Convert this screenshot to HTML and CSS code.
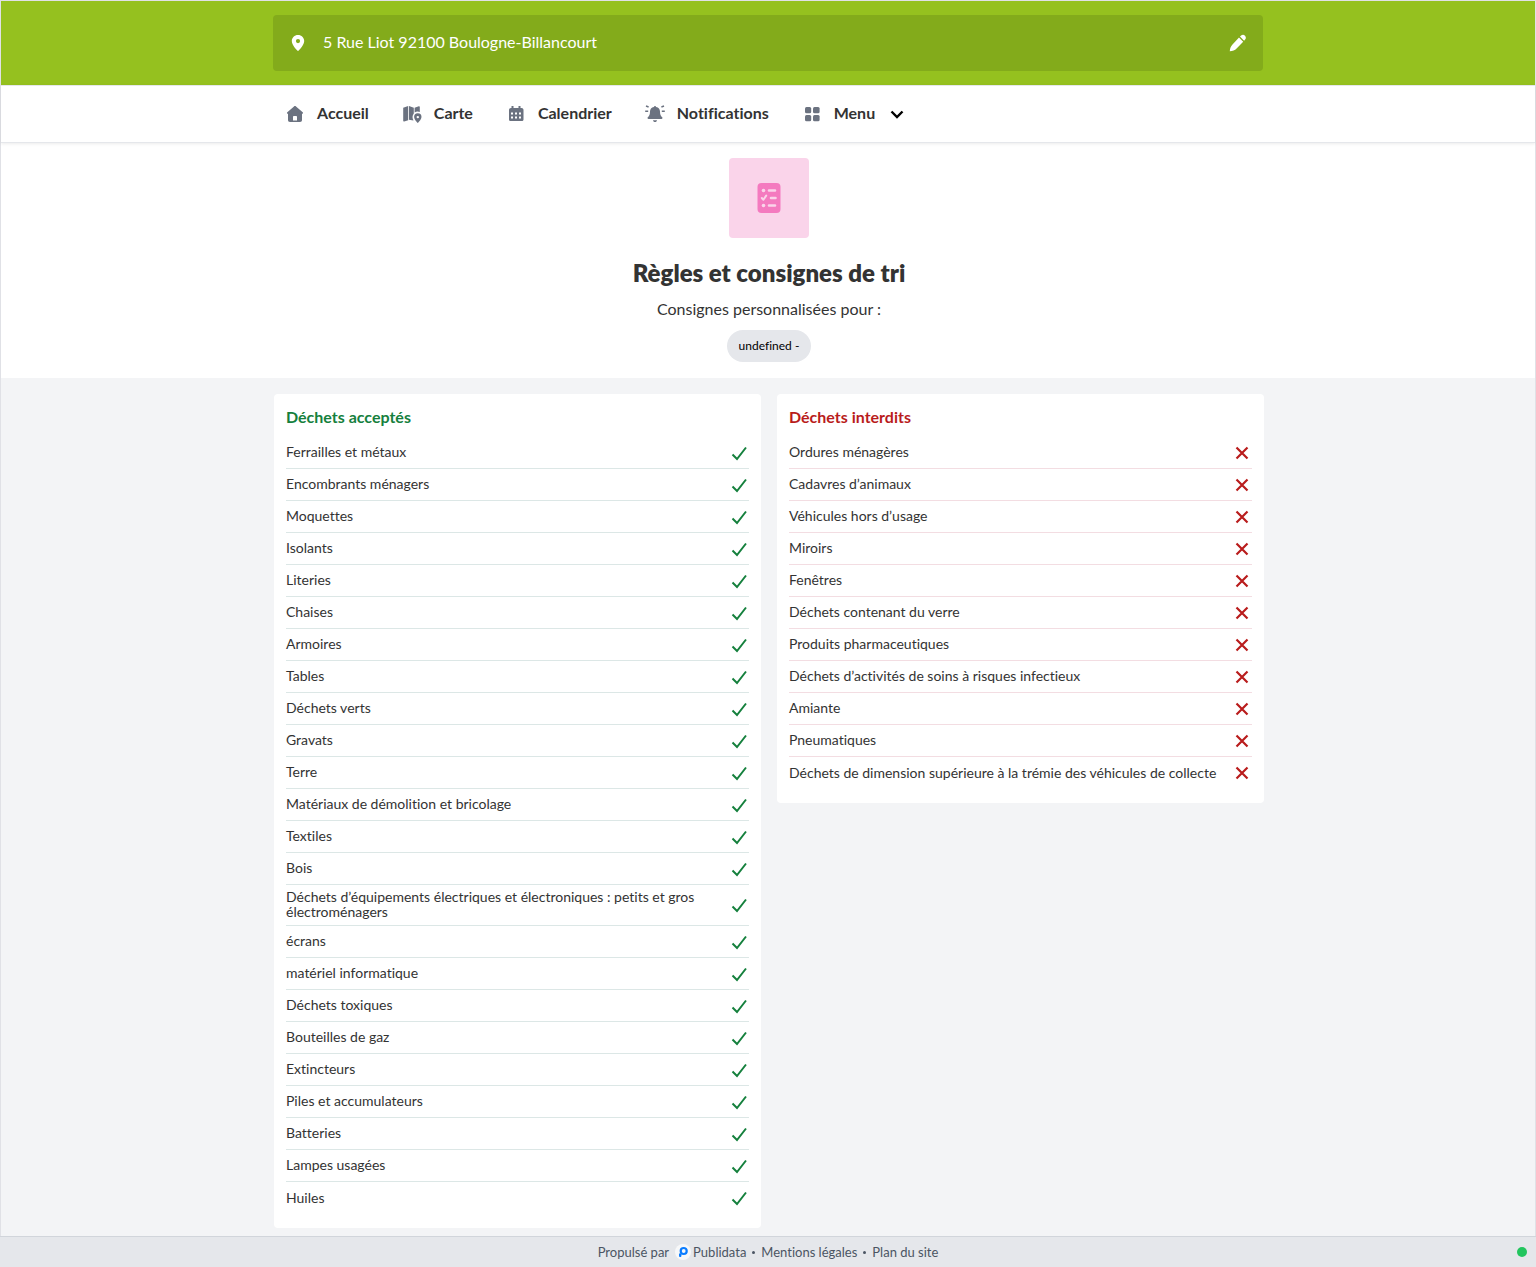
FILE: index.html
```html
<!DOCTYPE html>
<html lang="fr">
<head>
<meta charset="utf-8">
<meta name="viewport" content="width=device-width, initial-scale=1">
<title>Règles et consignes de tri</title>
<link rel="stylesheet" href="styles.css">
</head>
<body>
<svg class="sprite" aria-hidden="true">
  <symbol id="check" viewBox="0 0 20 20"><path d="M3.500 12.500l4.500 4.500L17 5.500" fill="none" stroke="currentColor" stroke-width="2"/></symbol>
  <symbol id="cross" viewBox="0 0 20 20"><path d="M4.500 5.500l11 11M15.500 5.500l-11 11" fill="none" stroke="currentColor" stroke-width="2.200"/></symbol>
</svg>
<div class="page">
  <header class="topbar">
    <div class="address container">
      <svg class="icon" viewBox="0 0 20 20"><path fill="currentColor" fill-rule="evenodd" d="M10 2C6.500 2 3.800 4.700 3.800 8.100c0 4.200 4.700 8.500 5.500 9.500.4.500 1 .5 1.400 0 .8-1 5.500-5.300 5.500-9.500C16.200 4.700 13.500 2 10 2zm0 4a2.100 2.100 0 1 1 0 4.200A2.100 2.100 0 0 1 10 6z"/></svg>
      <span class="address-text">5 Rue Liot 92100 Boulogne-Billancourt</span>
      <button class="edit" type="button" aria-label="Modifier l’adresse"><svg class="icon" viewBox="0 0 20 20"><path fill="currentColor" d="M12 3.600l1.100-1c1.200-1.100 2.800-1 3.900.1s1.200 2.700.1 3.900l-1 1.100zM11 4.600l4.200 4.200-6.600 6.600C6.900 17.100 4.600 18 1.800 18.200c.1-2.800 1-5.100 2.700-6.800z"/></svg></button>
    </div>
  </header>
  <nav class="nav">
    <div class="nav-list container">
      <a class="nav-link" href="#"><svg class="icon" viewBox="0 0 20 20"><path fill="currentColor" fill-rule="evenodd" d="M10 2c.4 0 .7.200 1 .4l6.700 5.800c.7.700.3 1.600-.6 1.600H17V16c0 1.300-.7 2-2 2H5c-1.300 0-2-.7-2-2V9.800h-.1c-.9 0-1.300-.9-.6-1.600L9 2.400c.3-.2.600-.4 1-.4zM8.800 12c-.5 0-.8.300-.8.800V16.500h4v-3.700c0-.5-.3-.8-.8-.8z"/></svg><span class="nav-label">Accueil</span></a>
      <a class="nav-link" href="#"><svg class="icon" viewBox="0 0 20 20"><path fill="currentColor" d="M1.200 3.800L6.200 2v14.200L2.200 17.500c-.6.200-1-.1-1-.7zM7 2l4.800 1.800v5.700A6 6 0 0 0 10.500 13c0 1.300.4 2.400 1 3.400L7 15.800zM12.600 3.800l4.200-1.600c.6-.2 1 .1 1 .7V8a5.500 5.500 0 0 0-5.200.6z"/><path fill="currentColor" fill-rule="evenodd" d="M15.800 9.300a3.700 3.700 0 0 0-3.700 3.800c0 2.100 2.300 4.400 3.100 5.500.3.400.8.400 1.100 0 .8-1.100 3.200-3.400 3.200-5.500a3.700 3.700 0 0 0-3.700-3.800zm0 2.600a1.200 1.200 0 1 1 0 2.400 1.200 1.200 0 0 1 0-2.400z"/></svg><span class="nav-label">Carte</span></a>
      <a class="nav-link" href="#"><svg class="icon" viewBox="0 0 20 20"><path fill="currentColor" fill-rule="evenodd" d="M5.500 2h2v2h5V2h2v2h1c1.200 0 2 .8 2 2v9.500c0 1-.8 1.500-1.800 1.500H4.800C3.800 17 3 16.500 3 15.500V6c0-1.200.8-2 2-2h.5zM5 8.500v2h2v-2zm4 0v2h2v-2zm4 0v2h2v-2zm-8 4v2h2v-2zm4 0v2h2v-2zm4 0v2h2v-2z"/></svg><span class="nav-label">Calendrier</span></a>
      <a class="nav-link" href="#"><svg class="icon" viewBox="0 0 20 20"><path fill="currentColor" d="M10 2c.6 0 1 .4 1.100.9 2.500.5 3.900 2.300 3.900 4.500 0 3 .7 4.500 2.200 5.900.6.600.3 1.700-.7 1.700H3.500c-1 0-1.300-1.100-.7-1.700C4.300 11.900 5 10.400 5 7.400c0-2.200 1.400-4 3.900-4.500C9 2.400 9.400 2 10 2zM8 16.200h4c0 1-1 1.800-2 1.800s-2-.8-2-1.800z"/><path d="M1 2l2.600 1M19 2l-2.600 1M.2 7.300h3M19.800 7.300h-3" stroke="currentColor" stroke-width="1.500"/></svg><span class="nav-label">Notifications</span></a>
      <button class="nav-link" type="button"><svg class="icon" viewBox="0 0 20 20"><g fill="currentColor"><rect x="3" y="3" width="6.200" height="6.200" rx="1.500"/><rect x="11" y="3" width="6.600" height="6.200" rx="1.500"/><rect x="3" y="11" width="6.200" height="6.200" rx="1.500"/><rect x="11" y="11" width="6.600" height="6.200" rx="1.500"/></g></svg><span class="nav-label">Menu</span><svg class="chevron" viewBox="0 0 20 20"><path d="M4.500 7.500l5.500 5.500 5.500-5.500" fill="none" stroke="currentColor" stroke-width="2.400"/></svg></button>
    </div>
  </nav>
  <main>
    <section class="intro">
      <div class="badge"><svg class="badge-icon" viewBox="0 0 32 32"><rect x="4.500" y="1" width="23" height="30" rx="4" fill="#f47abf"/><g fill="none" stroke="#fad4ea" stroke-width="2.600" stroke-linecap="round"><path d="M16 8.500h6M18 16h4.500M16 23.500h6"/><path d="M8.800 16l1.600 1.800 2.800-4.200" stroke-width="2" stroke-linejoin="round"/></g><g fill="#fad4ea"><circle cx="10.500" cy="8.500" r="1.800"/><circle cx="10.500" cy="23.500" r="1.800"/></g></svg></div>
      <h1 class="title">Règles et consignes de tri</h1>
      <p class="subtitle">Consignes personnalisées pour :</p>
      <span class="pill">undefined -</span>
    </section>
    <section class="lists">
      <div class="columns container">
        <article class="card accepted">
          <h2 class="card-title">Déchets acceptés</h2>
          <ul class="items">
            <li>Ferrailles et métaux<svg class="mark"><use href="#check"/></svg></li>
            <li>Encombrants ménagers<svg class="mark"><use href="#check"/></svg></li>
            <li>Moquettes<svg class="mark"><use href="#check"/></svg></li>
            <li>Isolants<svg class="mark"><use href="#check"/></svg></li>
            <li>Literies<svg class="mark"><use href="#check"/></svg></li>
            <li>Chaises<svg class="mark"><use href="#check"/></svg></li>
            <li>Armoires<svg class="mark"><use href="#check"/></svg></li>
            <li>Tables<svg class="mark"><use href="#check"/></svg></li>
            <li>Déchets verts<svg class="mark"><use href="#check"/></svg></li>
            <li>Gravats<svg class="mark"><use href="#check"/></svg></li>
            <li>Terre<svg class="mark"><use href="#check"/></svg></li>
            <li>Matériaux de démolition et bricolage<svg class="mark"><use href="#check"/></svg></li>
            <li>Textiles<svg class="mark"><use href="#check"/></svg></li>
            <li>Bois<svg class="mark"><use href="#check"/></svg></li>
            <li>Déchets d’équipements électriques et électroniques : petits et gros électroménagers<svg class="mark"><use href="#check"/></svg></li>
            <li>écrans<svg class="mark"><use href="#check"/></svg></li>
            <li>matériel informatique<svg class="mark"><use href="#check"/></svg></li>
            <li>Déchets toxiques<svg class="mark"><use href="#check"/></svg></li>
            <li>Bouteilles de gaz<svg class="mark"><use href="#check"/></svg></li>
            <li>Extincteurs<svg class="mark"><use href="#check"/></svg></li>
            <li>Piles et accumulateurs<svg class="mark"><use href="#check"/></svg></li>
            <li>Batteries<svg class="mark"><use href="#check"/></svg></li>
            <li>Lampes usagées<svg class="mark"><use href="#check"/></svg></li>
            <li>Huiles<svg class="mark"><use href="#check"/></svg></li>
          </ul>
        </article>
        <article class="card refused">
          <h2 class="card-title">Déchets interdits</h2>
          <ul class="items">
            <li>Ordures ménagères<svg class="mark"><use href="#cross"/></svg></li>
            <li>Cadavres d’animaux<svg class="mark"><use href="#cross"/></svg></li>
            <li>Véhicules hors d’usage<svg class="mark"><use href="#cross"/></svg></li>
            <li>Miroirs<svg class="mark"><use href="#cross"/></svg></li>
            <li>Fenêtres<svg class="mark"><use href="#cross"/></svg></li>
            <li>Déchets contenant du verre<svg class="mark"><use href="#cross"/></svg></li>
            <li>Produits pharmaceutiques<svg class="mark"><use href="#cross"/></svg></li>
            <li>Déchets d’activités de soins à risques infectieux<svg class="mark"><use href="#cross"/></svg></li>
            <li>Amiante<svg class="mark"><use href="#cross"/></svg></li>
            <li>Pneumatiques<svg class="mark"><use href="#cross"/></svg></li>
            <li>Déchets de dimension supérieure à la trémie des véhicules de collecte<svg class="mark"><use href="#cross"/></svg></li>
          </ul>
        </article>
      </div>
    </section>
  </main>
</div>
<footer class="footer">
  <span>Propulsé par</span>
  <a class="brand" href="#"><svg class="logo" viewBox="0 0 16 16"><circle cx="8" cy="8" r="8" fill="#fff" opacity=".7"/><circle cx="8.700" cy="7" r="3" fill="none" stroke="#0a7cff" stroke-width="2.200"/><path d="M4 9.500v2.300c0 .8.500 1.200 1.200 1.200s1.200-.4 1.200-1.200V9.500z" fill="#0a7cff"/></svg>Publidata</a>
  <span class="dot"></span>
  <a href="#">Mentions légales</a>
  <span class="dot"></span>
  <a href="#">Plan du site</a>
  <span class="status"></span>
</footer>
</body>
</html>
```

FILE: styles.css
```css
*, *::before, *::after { box-sizing: border-box; }
body {
  margin: 0;
  min-height: 100vh;
  display: flex;
  flex-direction: column;
  font-family: Lato, "Liberation Sans", sans-serif;
  font-size: 16px;
  line-height: 24px;
  font-variant-ligatures: none;
  color: #333;
  background: #f3f4f6;
}
h1, h2, p, ul { margin: 0; padding: 0; }
a { color: inherit; text-decoration: none; }
button { font: inherit; font-variant-ligatures: none; color: inherit; background: none; border: 0; padding: 0; cursor: pointer; }
svg { display: block; flex: none; }
.sprite { position: absolute; width: 0; height: 0; }
.icon, .chevron, .mark { width: 20px; height: 20px; }
.container { width: 100%; max-width: 990px; margin: 0 auto; }

.page { flex: 1; border: 1px solid #e0e1e6; border-bottom: 0; }
.topbar { padding: 14px 16px; background: #95c11f; color: #fff; }
.address {
  display: flex;
  align-items: center;
  min-height: 56px;
  padding: 0 15px;
  background: #83ab1b;
  border-radius: 4px;
}
.address-text { flex: 1; padding: 0 15px 2px; }

.nav {
  position: relative;
  padding: 0 16px;
  background: #fff;
  border: solid #e5e7eb;
  border-width: 1px 0;
  box-shadow: 0 1px 3px rgba(0, 0, 0, .08);
}
.nav-list { display: flex; flex-wrap: wrap; gap: 9px; }
.nav-link {
  display: flex;
  align-items: center;
  gap: 12px;
  padding: 15px 12px;
  font-weight: 700;
}
.nav-label { padding-bottom: 2px; }
.nav-link .icon { color: #6b7280; }
.chevron { color: #000; }

.intro {
  display: flex;
  flex-direction: column;
  align-items: center;
  padding: 15px 16px 16px 18px;
  text-align: center;
  background: #fff;
}
.badge {
  display: grid;
  place-items: center;
  width: 80px;
  height: 80px;
  border-radius: 4px;
  background: #fad4ea;
}
.badge-icon { width: 32px; height: 32px; }
.title { margin-top: 19px; font-size: 24px; line-height: 32px; font-weight: 800; }
.subtitle { margin-top: 8px; }
.pill {
  margin-top: 9px;
  padding: 0 12px;
  border-radius: 16px;
  background: #e5e7eb;
  color: #000;
  font-size: 12px;
  line-height: 32px;
}

.lists { padding: 16px 16px 8px 18px; }
.columns {
  display: grid;
  grid-template-columns: repeat(auto-fit, minmax(320px, 1fr));
  align-items: start;
  gap: 16px;
}
.card { padding: 11px 12px 14px; background: #fff; border-radius: 4px; }
.card-title { margin-bottom: 8px; font-size: 16px; line-height: 24px; font-weight: 700; }
.items { list-style: none; font-size: 14px; line-height: 15px; }
.items li {
  display: flex;
  align-items: center;
  justify-content: space-between;
  gap: 8px;
  min-height: 32px;
  padding: 4px 0 6px;
  border-bottom: 1px solid;
}
.items li:last-child { border-bottom: 0; }
.accepted .card-title, .accepted .mark { color: #15803d; }
.refused .card-title, .refused .mark { color: #b91c1c; }
.accepted li { border-color: #dce7e6; }
.refused li { border-color: #f3dde2; }

.footer {
  position: relative;
  display: flex;
  flex-wrap: wrap;
  align-items: center;
  justify-content: center;
  gap: 6px;
  min-height: 31px;
  border-top: 1px solid #d1d5db;
  background: #e5e7eb;
  color: #4b5563;
  font-size: 13px;
  line-height: 20px;
}
.brand { display: flex; align-items: center; gap: 2px; }
.logo { width: 16px; height: 16px; }
.dot { width: 3px; height: 3px; border-radius: 50%; background: #4b5563; }
.status {
  position: absolute;
  right: 9px;
  top: 10px;
  width: 10px;
  height: 10px;
  border-radius: 50%;
  background: #22c55e;
}
```
